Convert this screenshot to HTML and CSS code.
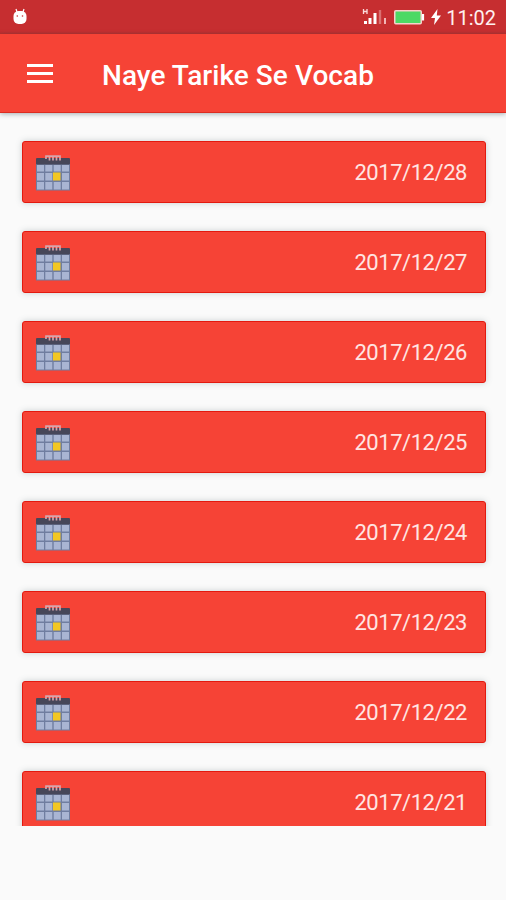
FILE: index.html
```
<!DOCTYPE html>
<html lang="en">
<head>
  <meta charset="UTF-8" />
  <meta name="viewport" content="width=device-width, initial-scale=1.0"/>
  <title>Naye Tarike Se Vocab</title>
  <link rel="stylesheet" href="styles.css">
</head>
<body>

  <svg class="sprite">
    <symbol id="calendar" viewBox="0 0 34 36">
      <rect x="0" y="8" width="34" height="27.5" fill="#6f7da0"/>
      <g fill="#a9b5d3">
        <rect x="1" y="10" width="7" height="6.5"/><rect x="9.3" y="10" width="7" height="6.5"/><rect x="17.7" y="10" width="7" height="6.5"/><rect x="26" y="10" width="7" height="6.5"/>
        <rect x="1" y="18" width="7" height="7.5"/><rect x="9.3" y="18" width="7" height="7.5"/><rect x="26" y="18" width="7" height="7.5"/>
        <rect x="1" y="27" width="7" height="7.5"/><rect x="9.3" y="27" width="7" height="7.5"/><rect x="17.7" y="27" width="7" height="7.5"/><rect x="26" y="27" width="7" height="7.5"/>
      </g>
      <rect x="17" y="17.5" width="7.5" height="8" fill="#f3c724"/>
      <rect x="0" y="3" width="34" height="6.5" rx="1" fill="#464659"/>
      <path d="M10 4V1.2H24V5.5M13.5 1.5V5.5M17 1.5V5.5M20.5 1.5V5.5" fill="none" stroke="#d6a5ac" stroke-width="1.7"/>
    </symbol>
  </svg>

  <div class="status-bar">
    <svg class="debug" width="16" height="18" viewBox="0 0 16 18">
      <path d="M4 1L5 4M12 1L11 4" stroke="#fff" stroke-width="1.2"/>
      <rect x="1.5" y="3" width="13" height="13" rx="5" fill="#fff"/>
      <circle cx="5.3" cy="8" r=".8" fill="#c62e30"/><circle cx="10.5" cy="8" r=".8" fill="#c62e30"/>
    </svg>
    <div class="status-right">
      <svg width="26" height="18" viewBox="0 0 26 18">
        <path d="M1.5 1V6M5 1V6M1.5 3.5H5" fill="none" stroke="#fbdcdc" stroke-width="1.3"/>
        <path d="M3.5 13V16M8 10V16M13 5V16" stroke="#fff" stroke-width="3"/>
        <path d="M18 2V16" stroke="#da7172" stroke-width="2.4"/>
        <path d="M23 10V16" stroke="#f2b5b5" stroke-width="2"/>
      </svg>
      <svg class="battery" width="31" height="15" viewBox="0 0 31 15">
        <rect x=".75" y=".75" width="26.5" height="13" rx="1" fill="#4cd964" stroke="#f8d0cc" stroke-width="1.5"/>
        <path d="M29 4V10.5" stroke="#fff" stroke-width="2.2"/>
      </svg>
      <svg class="bolt" width="10" height="16" viewBox="0 0 10 16">
        <path d="M6.5 0L0 9H4L3 16L10 6.5H5.8Z" fill="#fff"/>
      </svg>
      <span class="clock">11:02</span>
    </div>
  </div>

  <header class="toolbar">
    <div class="menu"><span></span><span></span><span></span></div>
    <h1>Naye Tarike Se Vocab</h1>
  </header>

  <main class="list">
    <div class="card"><svg class="icon"><use href="#calendar"/></svg><span>2017/12/28</span></div>
    <div class="card"><svg class="icon"><use href="#calendar"/></svg><span>2017/12/27</span></div>
    <div class="card"><svg class="icon"><use href="#calendar"/></svg><span>2017/12/26</span></div>
    <div class="card"><svg class="icon"><use href="#calendar"/></svg><span>2017/12/25</span></div>
    <div class="card"><svg class="icon"><use href="#calendar"/></svg><span>2017/12/24</span></div>
    <div class="card"><svg class="icon"><use href="#calendar"/></svg><span>2017/12/23</span></div>
    <div class="card"><svg class="icon"><use href="#calendar"/></svg><span>2017/12/22</span></div>
    <div class="card"><svg class="icon"><use href="#calendar"/></svg><span>2017/12/21</span></div>
  </main>

</body>
</html>
```
FILE: styles.css
```
:root {
  --bg: #fafafa;
  --primary: #f64336;
  --primary-dark: #c62e30;
  --edge: #e3190f;
}
* { box-sizing: border-box; margin:0; padding:0; }
body {
  background: var(--bg);
  font-family: Roboto, "Liberation Sans", sans-serif;
  color: #fff;
  height: 900px;
  overflow: hidden;
}
svg { display:block; }
.sprite { display:none; }

.status-bar {
  height: 34px; padding: 0 10px 0 12px;
  display:flex; align-items:center; justify-content:space-between;
  background: linear-gradient(var(--primary-dark) 31px, #b92b2a);
}
.debug { margin-bottom: 1px; }
.status-right { display:flex; align-items:center; }
.battery { margin-left: 6px; }
.bolt { margin: 0 5px 0 6px; }
.clock { font-size: 20px; line-height: 34px; padding-top: 2px; color:#fff0ef; }

.toolbar {
  position: relative;
  height: 79px; padding-left: 27px;
  display:flex; align-items:center;
  background: var(--primary);
  border-bottom: 1px solid #dc2c20;
  box-shadow: 0 1px 5px rgba(60, 80, 90, .45);
}
.menu { width: 26px; display:flex; flex-direction:column; gap: 5px; }
.menu span { height: 3px; background:#fff; }
h1 { margin: 4px 0 0 49px; font-size: 28px; font-weight: 500; letter-spacing: .05px; white-space: nowrap; }

/* the last card is cut by the bottom of the list */
.list {
  height: 713px; padding: 28px 20px 0 22px;
  display:flex; flex-direction:column; gap: 28px;
  overflow: hidden;
}
.card {
  flex: none;
  height: 62px; padding: 0 18px 0 13px;
  display:flex; align-items:center; justify-content:space-between;
  background: var(--primary);
  border: 1px solid var(--edge);
  border-radius: 3px;
  box-shadow: 0 0 6px rgba(90, 110, 115, .3);
}
.icon { width: 34px; height: 36px; margin-top: 2px; }
.card span { font-size: 22px; letter-spacing: -.45px; color:#ffe5e2; }
```
